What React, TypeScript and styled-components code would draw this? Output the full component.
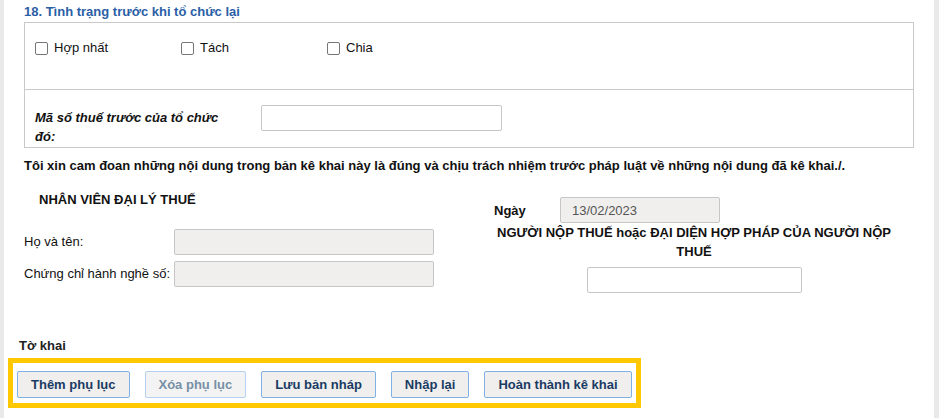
import React from "react";
import styled, { createGlobalStyle } from "styled-components";

const GlobalStyle = createGlobalStyle`
  html, body, #root { margin: 0; padding: 0; height: 100%; }
  body {
    background: #ffffff;
    font-family: "Liberation Sans", Arial, sans-serif;
    color: #111111;
    font-size: 13px;
  }
  * { box-sizing: border-box; }
`;

const Page = styled.div`
  display: flex;
  min-height: 100vh;
  overflow: hidden;
`;

const Rail = styled.div<{ $w: number }>`
  flex: 0 0 ${(p) => p.$w}px;
  background: #e9e9e9;
`;

const Main = styled.div`
  flex: 1;
  display: flex;
  flex-direction: column;
  align-items: flex-start;
`;

const SectionTitle = styled.div`
  margin: 4px 0 0 20px;
  font-size: 13px;
  line-height: 16px;
  font-weight: bold;
  color: #2a5ea6;
`;

const Box = styled.div`
  margin: 2px 0 0 20px;
  width: 890px;
  border: 1px solid #c9c9c9;
`;

const CheckRow = styled.div`
  height: 67px;
  padding: 17px 10px 0;
  display: flex;
  border-bottom: 1px solid #c9c9c9;
`;

const CheckItem = styled.label`
  width: 146px;
  height: 16px;
  display: flex;
  align-items: center;
  gap: 6px;
  font-size: 13px;
  line-height: 16px;
`;

const Check = styled.input.attrs({ type: "checkbox" })`
  appearance: none;
  margin: 0;
  width: 13px;
  height: 13px;
  border: 1px solid #767676;
  border-radius: 2px;
  background: #fff;
`;

const TaxRow = styled.div`
  height: 57px;
  padding: 15px 10px 0;
  display: grid;
  grid-template-columns: 190px 241px;
  column-gap: 36px;
  align-items: start;
`;

const ItalicLabel = styled.div`
  padding-top: 3px;
  font-size: 13px;
  line-height: 19px;
  font-weight: bold;
  font-style: italic;
`;

const Field = styled.input<{ $w: number; $filled?: boolean }>`
  width: ${(p) => p.$w}px;
  height: 26px;
  margin: 0;
  padding: 0 11px;
  border: 1px solid #c6c6c6;
  border-radius: 2px;
  background: ${(p) => (p.$filled ? "#f0efee" : "#ffffff")};
  font-family: "Liberation Sans", Arial, sans-serif;
  font-size: 13px;
  color: #555555;
  outline: none;
`;

const Pledge = styled.div`
  margin: 10px 0 0 20px;
  font-size: 13px;
  line-height: 16px;
  font-weight: bold;
`;

const Signatures = styled.div`
  margin-left: 20px;
  display: flex;
  align-items: flex-start;
`;

const AgentCol = styled.div`
  width: 460px;
  padding-top: 18px;
`;

const ColHeading = styled.div`
  padding-left: 15px;
  font-size: 13px;
  line-height: 16px;
  font-weight: bold;
`;

const AgentFields = styled.div`
  margin-top: 21px;
  display: flex;
  flex-direction: column;
  gap: 6px;
`;

const FieldRow = styled.div`
  display: flex;
  align-items: center;
`;

const FieldLabel = styled.span`
  width: 150px;
  font-size: 13px;
  line-height: 16px;
`;

const PayerCol = styled.div`
  width: 420px;
  padding-top: 23px;
  display: flex;
  flex-direction: column;
  align-items: center;
`;

const DateRow = styled.div`
  align-self: stretch;
  padding-left: 10px;
  display: flex;
  align-items: center;
`;

const DateLabel = styled.span`
  width: 66px;
  font-size: 13px;
  font-weight: bold;
`;

const PayerHeading = styled.div`
  font-size: 13px;
  line-height: 19px;
  font-weight: bold;
  text-align: center;
  margin-bottom: 6px;
`;

const FormLabel = styled.div`
  margin: 45px 0 0 15px;
  font-size: 13px;
  line-height: 16px;
  font-weight: bold;
  color: #222;
`;

const ActionFrame = styled.div`
  margin: 4px 0 0 4px;
  border: 5px solid #ffc800;
  padding: 8px 4px 5px;
  display: flex;
  gap: 15px;
`;

const ActionButton = styled.button`
  height: 27px;
  margin: 0;
  padding: 0 13px;
  border: 1px solid #7fb0e6;
  border-radius: 2px;
  background: #f0efee;
  font-family: "Liberation Sans", Arial, sans-serif;
  font-size: 13px;
  font-weight: bold;
  color: #1a3b63;

  &:disabled {
    border-color: #b3d0f0;
    background: #f4f3f3;
    color: #7790a6;
  }
`;

export default function App() {
  return (
    <>
      <GlobalStyle />
      <Page>
        <Rail $w={4} />
        <Main>
          <SectionTitle>18. Tình trạng trước khi tổ chức lại</SectionTitle>
          <Box>
            <CheckRow>
              <CheckItem>
                <Check />
                Hợp nhất
              </CheckItem>
              <CheckItem>
                <Check />
                Tách
              </CheckItem>
              <CheckItem>
                <Check />
                Chia
              </CheckItem>
            </CheckRow>
            <TaxRow>
              <ItalicLabel>Mã số thuế trước của tổ chức đó:</ItalicLabel>
              <Field $w={241} />
            </TaxRow>
          </Box>

          <Pledge>
            Tôi xin cam đoan những nội dung trong bản kê khai này là đúng và chịu trách nhiệm trước pháp
            luật về những nội dung đã kê khai./.
          </Pledge>

          <Signatures>
            <AgentCol>
              <ColHeading>NHÂN VIÊN ĐẠI LÝ THUẾ</ColHeading>
              <AgentFields>
                <FieldRow>
                  <FieldLabel>Họ và tên:</FieldLabel>
                  <Field $w={260} $filled readOnly />
                </FieldRow>
                <FieldRow>
                  <FieldLabel>Chứng chỉ hành nghề số:</FieldLabel>
                  <Field $w={260} $filled readOnly />
                </FieldRow>
              </AgentFields>
            </AgentCol>
            <PayerCol>
              <DateRow>
                <DateLabel>Ngày</DateLabel>
                <Field $w={160} $filled readOnly defaultValue="13/02/2023" />
              </DateRow>
              <PayerHeading>
                NGƯỜI NỘP THUẾ hoặc ĐẠI DIỆN HỢP PHÁP CỦA NGƯỜI NỘP
                <br />
                THUẾ
              </PayerHeading>
              <Field $w={215} />
            </PayerCol>
          </Signatures>

          <FormLabel>Tờ khai</FormLabel>
          <ActionFrame>
            <ActionButton>Thêm phụ lục</ActionButton>
            <ActionButton disabled>Xóa phụ lục</ActionButton>
            <ActionButton>Lưu bản nháp</ActionButton>
            <ActionButton>Nhập lại</ActionButton>
            <ActionButton>Hoàn thành kê khai</ActionButton>
          </ActionFrame>
        </Main>
        <Rail $w={5} />
      </Page>
    </>
  );
}
